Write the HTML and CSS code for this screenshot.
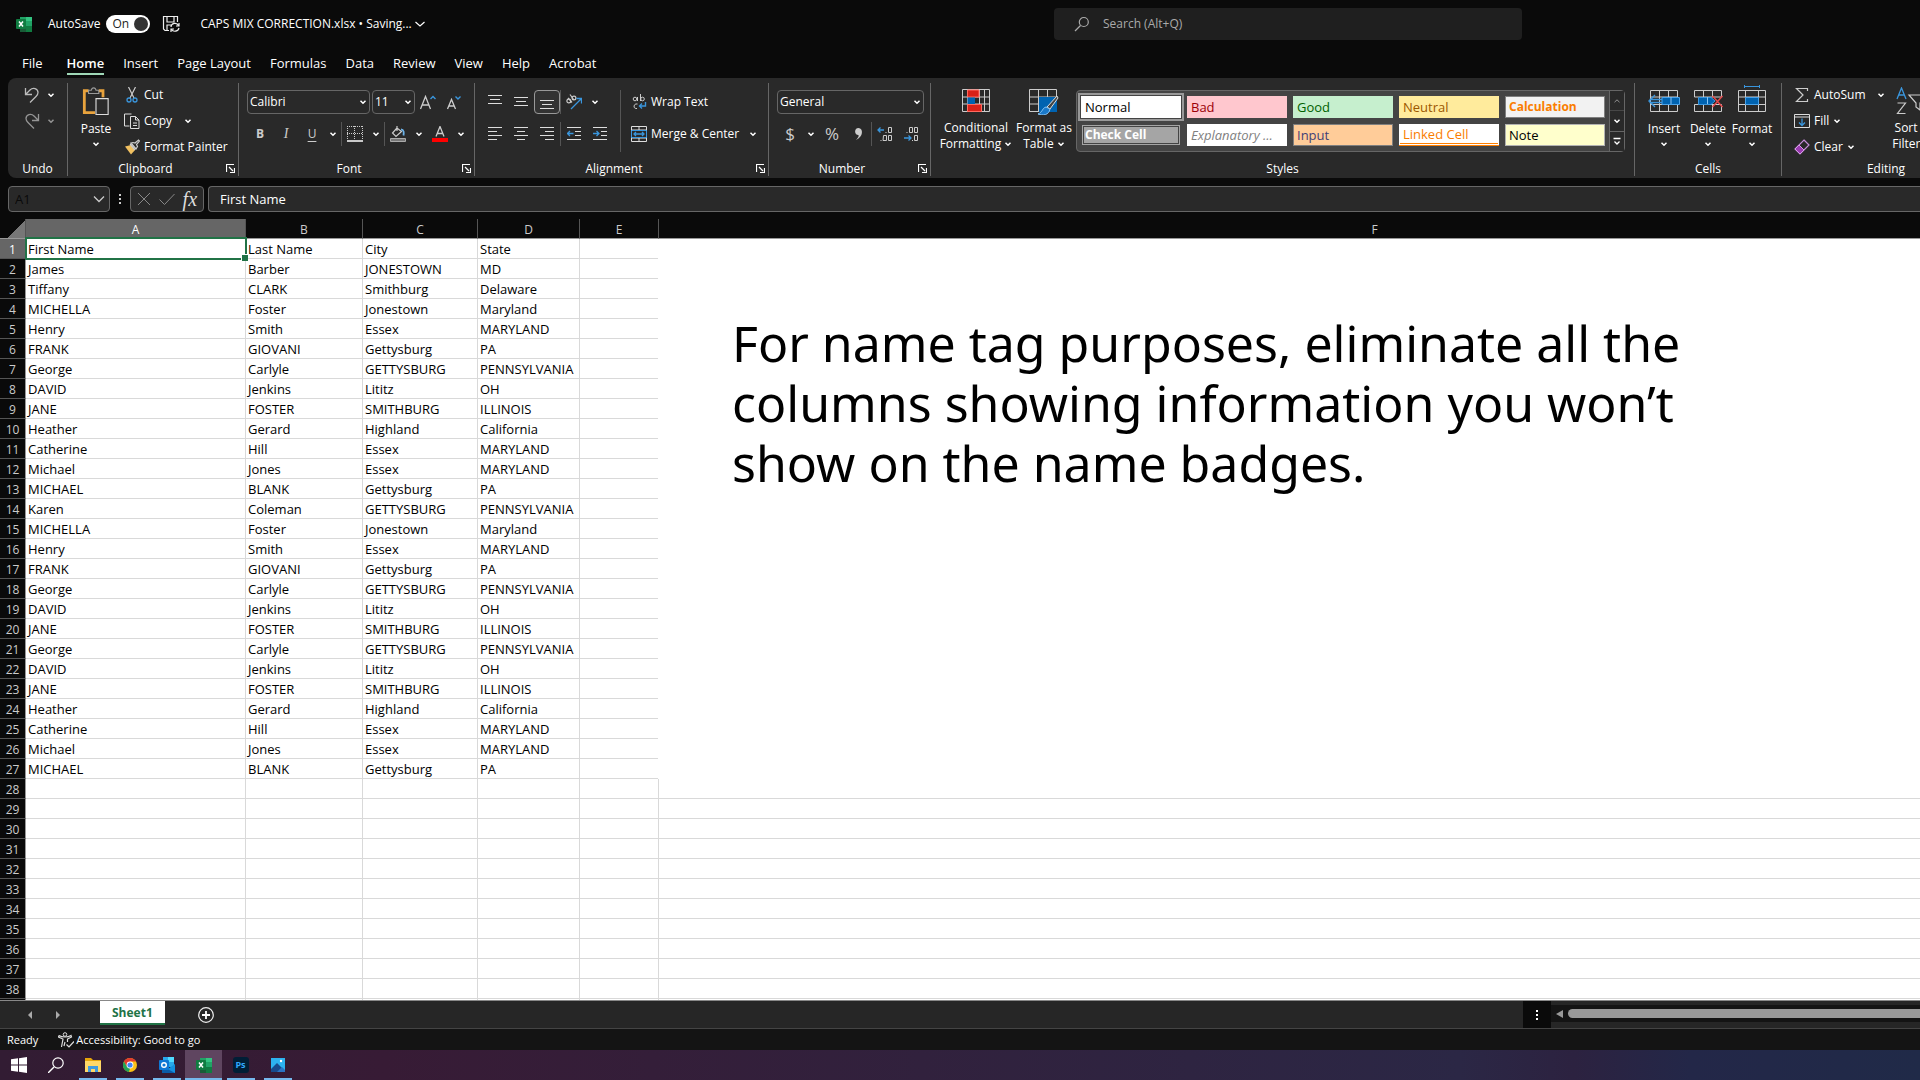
FILE: index.html
```html
<!DOCTYPE html>
<html lang="en">
<head>
    <meta charset="UTF-8">
    <meta name="viewport" content="width=device-width, initial-scale=1.0">
    <title>CAPS MIX CORRECTION.xlsx</title>
    <link rel="stylesheet" href="styles.css">
</head>
<body>
    <!-- shared icons -->
    <svg class="defs" aria-hidden="true">
        <symbol id="chev" viewBox="0 0 8 8"><path d="M1.5 2.8 4 5.2 6.500 2.800" fill="none" stroke="currentColor" stroke-width="1.500"/></symbol>
        <symbol id="launch" viewBox="0 0 9 9"><path d="M.5 8V.5H8M3 3l4 4M8.500 4v4.500H4" fill="none" stroke="currentColor" stroke-width="1.200"/></symbol>
        <symbol id="excel" viewBox="0 0 16 16">
            <path d="M4 1h6v7H4z" fill="#21a366"/><path d="M10 1h6v4h-6z" fill="#33c481"/><path d="M10 5h6v5h-6z" fill="#21a366"/>
            <path d="M4 8h6v8H4z" fill="#185c37"/><path d="M10 10h6v6h-6z" fill="#107c41"/>
            <rect y="3" width="10" height="10" rx="1" fill="#107c41"/><path d="m3 5.500 4 5m0-5-4 5" stroke="#fff" stroke-width="1.500"/>
        </symbol>
    </svg>

    <header class="titlebar">
        <svg class="i16"><use href="#excel"/></svg>
        <label class="autosave" for="autosave">AutoSave
            <span class="toggle">On <input type="checkbox" id="autosave" checked></span>
        </label>
        <button class="save" aria-label="Save"><svg class="i18" viewBox="0 0 18 18"><path d="M7 15.500H3L1.500 14V1.500h14V7M5 1.500V7h7V1.500M5 15.500V10h4" fill="none" stroke="#eee" stroke-width="1.200"/><path d="M9 12c0-4 6-5 7.500-1.500M17 8v3h-3M17 13c-1 4-6 4-7.500 1.500M9 17v-3h3" fill="none" stroke="#eee" stroke-width="1.200"/></svg></button>
        <button class="filename">CAPS MIX CORRECTION.xlsx • Saving... <svg class="i10" viewBox="0 0 10 10"><path d="m.5 3 4.500 4 4.500-4" fill="none" stroke="currentColor" stroke-width="1.200"/></svg></button>
        <label class="search">
            <svg class="i16" viewBox="0 0 16 16"><path d="M1 15l5.500-5.500" stroke="#aaa" stroke-width="1.200"/><circle cx="9.800" cy="6" r="4.500" fill="none" stroke="#aaa" stroke-width="1.200"/></svg>
            <input type="text" placeholder="Search (Alt+Q)" aria-label="Search">
        </label>
    </header>

    <nav class="tabs">
        <a href="#">File</a>
        <a href="#" class="active">Home</a>
        <a href="#">Insert</a>
        <a href="#">Page Layout</a>
        <a href="#">Formulas</a>
        <a href="#">Data</a>
        <a href="#">Review</a>
        <a href="#">View</a>
        <a href="#">Help</a>
        <a href="#">Acrobat</a>
    </nav>

    <div class="ribbon">
        <section class="group undo">
            <div class="stack">
                <button class="line"><svg class="i16" viewBox="0 0 16 16"><path d="M1.500 1v6.500H8M1.500 7.500 6 3c3-3 8-1.500 8 2.500 0 2-1 3-2 4L6 15.500" fill="none" stroke="#bbb" stroke-width="1.300"/></svg><svg class="i8"><use href="#chev"/></svg></button>
                <button class="line off"><svg class="i16" viewBox="0 0 16 16"><path d="M14.500 1v6.500H8M14.500 7.500 10 3C7 0 2 1.500 2 5.500c0 2 1 3 2 4l6 6" fill="none" stroke="#fff" stroke-width="1.300"/></svg><svg class="i8"><use href="#chev"/></svg></button>
            </div>
            <h2>Undo</h2>
        </section>

        <section class="group launch clipboard">
            <div class="body">
                <button class="big paste">
                    <svg class="i28" viewBox="0 0 28 30"><path d="M6 4H1.500v23.500H13M17 4h4.500v7" fill="none" stroke="#e8a33d" stroke-width="3"/><path d="M6 7V3.500h3C9.500 0 13.500 0 14 3.500h3V7z" fill="#2b2b2b" stroke="#999" stroke-width="1.200"/><path d="M14 12.500h13v17H14z" fill="#2b2b2b" stroke="#ddd" stroke-width="1.200"/></svg>
                    <span>Paste</span>
                    <svg class="i8"><use href="#chev"/></svg>
                </button>
                <div class="stack">
                    <button class="line"><svg class="i16" viewBox="0 0 16 16"><path d="m4.500 0 5.500 11M11.500 0 6 11" stroke="#ccc" stroke-width="1.200"/><circle cx="5" cy="13" r="2" fill="none" stroke="#3a96dd" stroke-width="1.300"/><circle cx="11" cy="13" r="2" fill="none" stroke="#3a96dd" stroke-width="1.300"/></svg>Cut</button>
                    <button class="line copy"><svg class="i16" viewBox="0 0 16 16"><path d="M5.500 13H.5V1h7M6.500 3.500h5l3.500 3.500v8.500H6.500zM11.500 3.500V7H15M9 10h4M9 12.500h4" fill="none" stroke="#ddd"/></svg>Copy <svg class="i8"><use href="#chev"/></svg></button>
                    <button class="line"><svg class="i16" viewBox="0 0 16 16"><path d="M1 7.500 7 6l4 5-4 4.500z" fill="#f0c060"/><path d="m6 5 5 6M7 4l5 6 1.500-2.500-1-2L15.500 2 14.500 1 11 4 9 3.500z" fill="none" stroke="#ccc" stroke-width="1.200"/></svg>Format Painter</button>
                </div>
            </div>
            <h2>Clipboard</h2>
            <button class="launcher" aria-label="Clipboard settings"><svg class="i9"><use href="#launch"/></svg></button>
        </section>

        <section class="group launch font">
            <div class="rows">
                <div class="row">
                    <span class="combo name"><select aria-label="Font"><option>Calibri</option></select><svg class="i8"><use href="#chev"/></svg></span>
                    <span class="combo size"><select aria-label="Font size"><option>11</option></select><svg class="i8"><use href="#chev"/></svg></span>
                    <button class="tool" aria-label="Increase font size"><svg class="i18" viewBox="0 0 18 18"><path d="M1.500 16 6.500 3.500 11.500 16M3 12h7" fill="none" stroke="#ccc" stroke-width="1.300"/><path d="m11.500 6 2.500-2.500L16.500 6" fill="none" stroke="#3a96dd" stroke-width="1.400"/></svg></button>
                    <button class="tool" aria-label="Decrease font size"><svg class="i18" viewBox="0 0 18 18"><path d="M2.500 16 6.500 6.500l4 9.500M4 13h5" fill="none" stroke="#ccc" stroke-width="1.300"/><path d="m10.500 3.500 2.500 2.500 2.500-2.500" fill="none" stroke="#3a96dd" stroke-width="1.400"/></svg></button>
                </div>
                <div class="row">
                    <button class="tool b">B</button>
                    <button class="tool i">I</button>
                    <button class="tool u">U</button>
                    <button class="drop" aria-label="Underline styles"><svg class="i8"><use href="#chev"/></svg></button>
                    <i class="bar"></i>
                    <button class="tool" aria-label="Borders"><svg class="i16" viewBox="0 0 16 16"><path d="M0 .5h16M0 7.500h16M.5 0v14M7.500 0v14M15.500 0v14" stroke="#ccc" stroke-dasharray="1 1"/><path d="M0 15h16" stroke="#fff" stroke-width="1.500"/></svg></button>
                    <button class="drop" aria-label="Border styles"><svg class="i8"><use href="#chev"/></svg></button>
                    <i class="bar"></i>
                    <button class="tool" aria-label="Fill color"><svg class="i16" viewBox="0 0 16 16"><path d="M7 0v5M7 2 2.500 7 6 10.500 11.500 5.500z" fill="none" stroke="#ccc" stroke-width="1.200"/><path d="M11 3.500c3 0 3 3 2.500 6" fill="none" stroke="#6cb2e8" stroke-width="1.800"/><path d="M.5 12.500h15v3H.5z" fill="#777" stroke="#aaa"/></svg></button>
                    <button class="drop" aria-label="Fill colors"><svg class="i8"><use href="#chev"/></svg></button>
                    <button class="tool" aria-label="Font color"><svg class="i16" viewBox="0 0 16 16"><path d="M4 10.500 8 .500l4 10M5.500 7.500h5" fill="none" stroke="#ccc" stroke-width="1.300"/><path d="M0 12h16v4H0z" fill="#f00"/></svg></button>
                    <button class="drop" aria-label="Font colors"><svg class="i8"><use href="#chev"/></svg></button>
                </div>
            </div>
            <h2>Font</h2>
            <button class="launcher" aria-label="Font settings"><svg class="i9"><use href="#launch"/></svg></button>
        </section>

        <section class="group launch alignment">
            <div class="body">
                <div class="rows">
                    <div class="row">
                        <button class="tool" aria-label="Top align"><svg class="i14" viewBox="0 0 14 14"><path d="M0 .5h14M2 4.500h10M0 8.500h14" stroke="#ddd"/></svg></button>
                        <button class="tool" aria-label="Middle align"><svg class="i14" viewBox="0 0 14 14"><path d="M0 2.500h14M2 6.500h10M0 10.500h14" stroke="#ddd"/></svg></button>
                        <button class="tool pressed" aria-label="Bottom align"><svg class="i14" viewBox="0 0 14 14"><path d="M0 5.500h14M2 9.500h10M0 13.500h14" stroke="#ddd"/></svg></button>
                        <i class="bar"></i>
                        <button class="tool" aria-label="Orientation"><svg class="i16" viewBox="0 0 16 16"><circle cx="2.800" cy="7" r="1.900" fill="none" stroke="#ccc" stroke-width="1.200"/><path d="M2 3.800 6 8.500" stroke="#ccc" stroke-width="1.200"/><circle cx="8" cy="4" r="1.900" fill="none" stroke="#ccc" stroke-width="1.200"/><path d="M4 .5 8 6" stroke="#ccc" stroke-width="1.200"/><path d="m5 15 10-10M10.500 4.500h5v5" fill="none" stroke="#3a96dd" stroke-width="1.300"/></svg></button>
                        <button class="drop" aria-label="Orientation options"><svg class="i8"><use href="#chev"/></svg></button>
                    </div>
                    <div class="row">
                        <button class="tool" aria-label="Align left"><svg class="i14" viewBox="0 0 14 14"><path d="M0 .5h14M0 4.500h9M0 8.500h14M0 12.500h9" stroke="#ddd"/></svg></button>
                        <button class="tool" aria-label="Center"><svg class="i14" viewBox="0 0 14 14"><path d="M0 .5h14M3 4.500h8M0 8.500h14M3 12.500h8" stroke="#ddd"/></svg></button>
                        <button class="tool" aria-label="Align right"><svg class="i14" viewBox="0 0 14 14"><path d="M0 .5h14M5 4.500h9M0 8.500h14M5 12.500h9" stroke="#ddd"/></svg></button>
                        <i class="bar"></i>
                        <button class="tool" aria-label="Decrease indent"><svg class="i14" viewBox="0 0 14 14"><path d="M0 .5h14M8 4.500h6M8 8.500h6M0 12.500h14" stroke="#ddd"/><path d="M6.500 6.500H.5M3 4 .5 6.500 3 9" fill="none" stroke="#3a96dd" stroke-width="1.300"/></svg></button>
                        <button class="tool" aria-label="Increase indent"><svg class="i14" viewBox="0 0 14 14"><path d="M0 .5h14M8 4.500h6M8 8.500h6M0 12.500h14" stroke="#ddd"/><path d="M0 6.500h6M3.500 4 6 6.500 3.500 9" fill="none" stroke="#3a96dd" stroke-width="1.300"/></svg></button>
                    </div>
                </div>
                <i class="bar tall"></i>
                <div class="rows wrap">
                    <button class="line"><svg class="i16" viewBox="0 0 16 16"><circle cx="4" cy="5" r="1.800" fill="none" stroke="#ccc"/><path d="M6.500 3v4M9.500 0v7M6.500 10c-4-1-5 5-.500 4.500" fill="none" stroke="#ccc"/><circle cx="11.500" cy="5" r="1.800" fill="none" stroke="#ccc"/><path d="M14.500 8v4H8.500M11 9.500 8.500 12l2.500 2.500" fill="none" stroke="#3a96dd" stroke-width="1.400"/></svg>Wrap Text</button>
                    <button class="line"><svg class="i16" viewBox="0 0 16 16"><path d="M.5.500h15v15H.5zM.5 4h15M.5 12h15M8 0v4M8 12v4" fill="none" stroke="#ddd"/><path d="M.5 4.500h15v7H.5z" fill="none" stroke="#3a96dd"/><path d="M3 8h10M5 6 3 8l2 2M11 6l2 2-2 2" fill="none" stroke="#3a96dd" stroke-width="1.300"/></svg>Merge &amp; Center <svg class="i8 far"><use href="#chev"/></svg></button>
                </div>
            </div>
            <h2>Alignment</h2>
            <button class="launcher" aria-label="Alignment settings"><svg class="i9"><use href="#launch"/></svg></button>
        </section>

        <section class="group launch number">
            <div class="rows">
                <div class="row"><span class="combo general"><select aria-label="Number format"><option>General</option></select><svg class="i8"><use href="#chev"/></svg></span></div>
                <div class="row">
                    <button class="tool sign">$</button>
                    <button class="drop" aria-label="Currencies"><svg class="i8"><use href="#chev"/></svg></button>
                    <button class="tool sign">%</button>
                    <button class="tool" aria-label="Comma style"><svg class="i14" viewBox="0 0 14 14"><path d="M7.500 1c5 0 5 9-2.500 12 2-2 3-3.500 2.500-5C3 8 3 1 7.500 1z" fill="#ccc"/></svg></button>
                    <i class="bar"></i>
                    <button class="tool dec" aria-label="Increase decimal"><svg class="i16" viewBox="0 0 16 16"><path d="M11.500 1.500h3v5h-3zM6.500 9.500h3v5H6zM11.500 9.500h3v5h-3zM8.500 6.500h1M3.500 14.500h1" fill="none" stroke="#ccc"/><path d="M7 4H1M3.500 1.500 1 4l2.500 2.500" fill="none" stroke="#3a96dd" stroke-width="1.300"/></svg></button>
                    <button class="tool dec" aria-label="Decrease decimal"><svg class="i16" viewBox="0 0 16 16"><path d="M6.500 1.500h3v5h-3zM11.500 1.500h3v5h-3zM11.500 9.500h3v5h-3zM3.500 6.500h1M9 14.500h1" fill="none" stroke="#ccc"/><path d="M1 12h7M5.500 9.500 8 12l-2.500 2.500" fill="none" stroke="#3a96dd" stroke-width="1.300"/></svg></button>
                </div>
            </div>
            <h2>Number</h2>
            <button class="launcher" aria-label="Number settings"><svg class="i9"><use href="#launch"/></svg></button>
        </section>

        <section class="group cellstyles">
            <div class="body">
                <button class="big cond">
                    <svg class="i28" viewBox="0 0 28 28"><path d="M.5 2.500h27v22H.5zM.5 10h27M.5 17h27M5.500 2v22M17.500 2v22M22.500 2v22" fill="none" stroke="#ccc"/><path d="M5.500 3H17v7H5.500zM5.500 17.500h14v7h-14z" fill="#d92118" stroke="#ff6a60"/><path d="M5.500 10.500H13V17H5.500z" fill="#0063b1"/></svg>
                    <span>Conditional<br>Formatting <svg class="i8"><use href="#chev"/></svg></span>
                </button>
                <button class="big astable">
                    <svg class="i30" viewBox="0 0 30 28"><path d="M.5 2.500h27v22H.5zM.5 10h27M.5 17h27M9.500 2v22M18.500 2v22" fill="none" stroke="#ccc"/><path d="M10 10h18v15H10z" fill="#0063b1"/><path d="m28 9-10 11 3 2 8-11z" fill="#444" stroke="#ddd"/><path d="M17 20c-4 1-3 5-8 7 5 2 11 1 12-5z" fill="#1a78c8" stroke="#8ac6f5"/></svg>
                    <span>Format as<br>Table <svg class="i8"><use href="#chev"/></svg></span>
                </button>
                <div class="gallery">
                    <div class="swatches">
                        <button class="sw normal">Normal</button>
                        <button class="sw bad">Bad</button>
                        <button class="sw good">Good</button>
                        <button class="sw neutral">Neutral</button>
                        <button class="sw calc">Calculation</button>
                        <button class="sw check">Check Cell</button>
                        <button class="sw expl">Explanatory ...</button>
                        <button class="sw inp">Input</button>
                        <button class="sw linked">Linked Cell</button>
                        <button class="sw note">Note</button>
                    </div>
                    <div class="scroll">
                        <button class="off" aria-label="Previous styles"><svg class="i8" viewBox="0 0 8 8"><path d="M1.500 5.200 4 2.800l2.500 2.400" fill="none" stroke="currentColor"/></svg></button>
                        <button aria-label="Next styles"><svg class="i8"><use href="#chev"/></svg></button>
                        <button aria-label="More styles"><svg class="i8" viewBox="0 0 8 8"><path d="M.5 1.500h7M1.500 4.500 4 7l2.500-2.500" fill="none" stroke="currentColor" stroke-width="1.300"/></svg></button>
                    </div>
                </div>
            </div>
            <h2>Styles</h2>
        </section>

        <section class="group cells">
            <div class="body">
                <button class="big">
                    <svg class="i32" viewBox="0 0 32 28"><path d="M2.500 5.500h27v21h-27zM2.500 12h27M2.500 19.500h27M11.500 5v21M20.500 5v21" fill="none" stroke="#ccc"/><path d="M14 12.500h17.500v7H14z" fill="#0063b1" stroke="#4aa3ea"/><path d="M23 12v7" stroke="#8ac6f5"/><path d="M14 14.500H1.500M14 17.500H1.500M7 10l-6 6 6 6" fill="none" stroke="#3a96dd" stroke-width="1.400"/></svg>
                    <span>Insert</span><svg class="i8"><use href="#chev"/></svg>
                </button>
                <button class="big">
                    <svg class="i32" viewBox="0 0 32 28"><path d="M2.500 12V5.500h27V12M2.500 19.500v7h27v-7M2.500 12h27M2.500 19.500h27M11.500 5v7M20.500 5v7M11.500 20v6M20.500 20v6" fill="none" stroke="#ccc"/><path d="M6.500 12.500H19l4 3.500-4 3.500H6.500z" fill="#0063b1" stroke="#3a96dd"/><path d="M15.500 12v7" stroke="#8ac6f5"/><path d="m20.500 11 10 11M30.500 11l-10 11" stroke="#e8484b" stroke-width="1.400"/></svg>
                    <span>Delete</span><svg class="i8"><use href="#chev"/></svg>
                </button>
                <button class="big">
                    <svg class="i32" viewBox="0 0 32 28"><path d="M2.500 5.500h27v21h-27zM2.500 12h27M2.500 19.500h27M9.500 5v21M22.500 5v21" fill="none" stroke="#ccc"/><path d="M9.500 12.500h13v7h-13z" fill="#0063b1" stroke="#4aa3ea"/><path d="M8.500 1.500h15M8.500 0v3M23.500 0v3" stroke="#3a96dd"/></svg>
                    <span>Format</span><svg class="i8"><use href="#chev"/></svg>
                </button>
            </div>
            <h2>Cells</h2>
        </section>

        <section class="group editing">
            <div class="body">
                <div class="stack">
                    <button class="line sum"><svg class="i16" viewBox="0 0 16 16"><path d="M13.500 4V1.500H2.500L9 8l-6.500 6.500h11V12" fill="none" stroke="#ccc" stroke-width="1.200"/></svg>AutoSum <svg class="i8"><use href="#chev"/></svg></button>
                    <button class="line"><svg class="i16" viewBox="0 0 16 16"><path d="M.5 1.500h15v13H.5zM.5 4h15" fill="none" stroke="#ddd"/><path d="M8 5.500v7M5 9.500l3 3 3-3" fill="none" stroke="#3a96dd" stroke-width="1.300"/></svg>Fill <svg class="i8"><use href="#chev"/></svg></button>
                    <button class="line"><svg class="i16" viewBox="0 0 16 16"><path d="m10 1 5 5-9 9-5-5z" fill="none" stroke="#c58bd8" stroke-width="1.200"/><path d="m5 6 5 5-4 4-5-5z" fill="#9a3bb0" stroke="#d79be8"/></svg>Clear <svg class="i8"><use href="#chev"/></svg></button>
                </div>
                <button class="big sort">
                    <svg class="i32" viewBox="0 0 32 28"><path d="M1 12 5.500 1 10 12M2.500 8h6" fill="none" stroke="#3a96dd" stroke-width="1.300"/><path d="M1.500 16h8L1.500 26.500h8M13 8h18l-7 8v7l-4-3v-4z" fill="none" stroke="#ccc" stroke-width="1.200"/></svg>
                    <span>Sort &amp;<br>Filter <svg class="i8"><use href="#chev"/></svg></span>
                </button>
            </div>
            <h2>Editing</h2>
        </section>
    </div>

    <div class="formulabar">
        <label class="namebox"><input type="text" value="A1" aria-label="Name box"><svg class="i12" viewBox="0 0 12 12"><path d="m1 3.500 5 5 5-5" fill="none" stroke="#ccc" stroke-width="1.300"/></svg></label>
        <span class="dots"><i></i><i></i><i></i></span>
        <div class="entry">
            <button aria-label="Cancel"><svg class="i14" viewBox="0 0 14 14"><path d="m1 1 12 12M13 1 1 13" stroke="#888"/></svg></button>
            <button aria-label="Enter"><svg class="i16" viewBox="0 0 16 16"><path d="m.5 8.500 5 5L15.500 3" fill="none" stroke="#888"/></svg></button>
            <button class="fx" aria-label="Insert function">fx</button>
        </div>
        <input class="formula" type="text" value="First Name" aria-label="Formula">
    </div>

    <main class="sheet">
        <table>
            <colgroup><col class="cn"><col class="ca"><col class="cb"><col class="cc"><col class="cd"><col class="ce"><col class="cf"></colgroup>
            <thead>
                <tr><th class="corner"></th><th class="sel">A</th><th>B</th><th>C</th><th>D</th><th>E</th><th>F</th></tr>
            </thead>
            <tbody id="rows"></tbody>
        </table>
        <div class="textbox">For name tag purposes, eliminate all the<br>columns showing information you won’t<br>show on the name badges.</div>
    </main>

    <div class="sheetbar">
        <button class="arrow" aria-label="Previous sheet"><svg class="i8" viewBox="0 0 8 8"><path d="M6 0v8L2 4z" fill="#aaa"/></svg></button>
        <button class="arrow" aria-label="Next sheet"><svg class="i8" viewBox="0 0 8 8"><path d="M2 0v8l4-4z" fill="#aaa"/></svg></button>
        <button class="sheettab">Sheet1</button>
        <button class="add" aria-label="New sheet"><svg class="i16" viewBox="0 0 16 16"><circle cx="8" cy="8" r="7.300" fill="none" stroke="#eee" stroke-width="1.200"/><path d="M8 4v8M4 8h8" stroke="#fff" stroke-width="1.800"/></svg></button>
        <span class="dots grip"><i></i><i></i><i></i></span>
        <div class="hscroll"><svg class="i8" viewBox="0 0 8 8"><path d="M8 0v8L1 4z" fill="#999"/></svg><span class="thumb"></span></div>
    </div>

    <footer class="status">
        <span>Ready</span>
        <svg class="i16" viewBox="0 0 16 16"><circle cx="7" cy="2.500" r="1.800" fill="none" stroke="#ddd"/><path d="M1 3.500c3 2 9 2 12 0l.5 1.500-4 2v3M1 3.500.500 5 5 7l-1.500 8M7 10l-1 4M8.500 12.500l2.500 2.500 5-5.500" fill="none" stroke="#ddd" stroke-width="1.200"/></svg>
        <span>Accessibility: Good to go</span>
    </footer>

    <nav class="taskbar">
        <button aria-label="Start"><svg class="i16" viewBox="0 0 16 16"><path d="M0 2.300 7 1.300v6.200H0zM8 1.200 16 0v7.500H8zM0 8.500h7v6.200l-7-1zM8 8.500h8V16l-8-1.200z" fill="#fff"/></svg></button>
        <button aria-label="Search"><svg class="i16" viewBox="0 0 16 16"><path d="M0 16l6-6" stroke="#fff" stroke-width="1.400"/><circle cx="10" cy="6" r="5.200" fill="none" stroke="#fff" stroke-width="1.200"/></svg></button>
        <button class="open" aria-label="File Explorer"><svg class="i16" viewBox="0 0 16 16"><path d="M0 1h6l2 2h8v5H0z" fill="#e5a50a"/><path d="M0 4h16v11H0z" fill="#ffd868"/><path d="M3 15V9h10v6h-3v-3H6v3z" fill="#3f9be0"/></svg></button>
        <button class="open" aria-label="Chrome"><svg class="i16" viewBox="0 0 16 16"><circle cx="8" cy="8" r="7" fill="#fbc116"/><path d="M1.900 4.500a7 7 0 0 1 12.200 0H8L5 9.800z" fill="#e33b2e"/><path d="M1.900 4.500 5 9.700l3 1.800L6.900 15A7 7 0 0 1 1.900 4.500z" fill="#23a455"/><circle cx="8" cy="8" r="3.400" fill="#fff"/><circle cx="8" cy="8" r="2.600" fill="#4285f4"/></svg></button>
        <button class="open" aria-label="Outlook"><svg class="i16" viewBox="0 0 16 16"><path d="M4 0h11v10H4z" fill="#28a8ea"/><path d="M9 0h6v5H9z" fill="#50d9ff"/><path d="M4 5h5v5H4z" fill="#0078d4"/><path d="M3 16 16 7v9z" fill="#1490df"/><path d="M3 9l13 7H3z" fill="#0a5ba8"/><rect y="3" width="10" height="10" rx="1" fill="#0f78d4"/><circle cx="5" cy="8" r="2.300" fill="none" stroke="#fff" stroke-width="1.400"/></svg></button>
        <button class="open current" aria-label="Excel"><svg class="i16"><use href="#excel"/></svg></button>
        <button class="open" aria-label="Photoshop"><span class="ps">Ps</span></button>
        <button class="open" aria-label="Photos"><svg class="i16" viewBox="0 0 16 16"><path d="M1 1h14v14H1z" fill="#2db2f0"/><path d="m1 12 6-6 8 8v1H1z" fill="#174a8c"/><path d="m7 15 5-5 3 3v2z" fill="#2a74c4"/><circle cx="11" cy="4" r="1.200" fill="#fff"/></svg></button>
    </nav>

    <script src="script.js"></script>
</body>
</html>
```
FILE: styles.css
```css
* {
    box-sizing: border-box;
}
body {
    margin: 0;
    height: 100vh;
    display: flex;
    flex-direction: column;
    overflow: hidden;
    background: #0a0a0a;
    color: #fff;
    font-family: "Open Sans", "Noto Sans", sans-serif;
    font-size: 12px;
    line-height: 16px;
}
button, input, select {
    margin: 0;
    padding: 0;
    border: 0;
    background: none;
    color: inherit;
    font: inherit;
    outline: none;
}
button {
    white-space: nowrap;
}
a {
    color: inherit;
    text-decoration: none;
}
svg {
    flex: none;
}
.defs {
    display: none;
}
.i8 { width: 8px; height: 8px; }
.i9 { width: 9px; height: 9px; }
.i10 { width: 10px; height: 10px; }
.i12 { width: 12px; height: 12px; }
.i14 { width: 14px; height: 14px; }
.i16 { width: 16px; height: 16px; }
.i18 { width: 18px; height: 18px; }
.i28 { width: 28px; height: 28px; }
.i30 { width: 30px; height: 28px; }
.i32 { width: 32px; height: 28px; }

/* title bar */
.titlebar {
    display: flex;
    align-items: center;
    height: 48px;
    flex: none;
    padding-left: 16px;
}
.autosave {
    display: flex;
    align-items: center;
    gap: 6px;
    margin-left: 16px;
}
.toggle {
    display: flex;
    align-items: center;
    justify-content: space-between;
    width: 44px;
    height: 18px;
    padding: 0 2px 0 6px;
    border-radius: 9px;
    background: #fff;
    color: #222;
}
.toggle input {
    appearance: none;
    width: 14px;
    height: 14px;
    border-radius: 50%;
    background: #333;
}
.save {
    display: flex;
    margin-left: 12px;
}
.filename {
    margin-left: 20px;
}
.filename svg {
    vertical-align: -1px;
}
.search {
    position: absolute;
    left: 1054px;
    top: 8px;
    display: flex;
    align-items: center;
    gap: 13px;
    width: 468px;
    height: 32px;
    padding-left: 20px;
    border-radius: 4px;
    background: #1f1f1f;
}
.search input {
    flex: 1;
}
.search input::placeholder {
    color: #aaa;
    opacity: 1;
}

/* ribbon tabs */
.tabs {
    display: flex;
    gap: 19px;
    flex: none;
    height: 30px;
    padding: 7px 0 0 22px;
    font-size: 13px;
}
.tabs a {
    height: 20px;
}
.tabs .active {
    margin-left: 5px;
    font-weight: 600;
    border-bottom: 2px solid #9fd8b7;
}

/* ribbon */
.ribbon {
    display: flex;
    flex: none;
    height: 100px;
    margin-left: 8px;
    padding: 5px 0 2px;
    overflow: hidden;
    border-radius: 8px 0 0 8px;
    background: #292929;
}
.group {
    position: relative;
    display: flex;
    flex-direction: column;
    flex: none;
    border-right: 1px solid #666;
}
.group h2 {
    margin: auto 0 0;
    font-size: 12px;
    font-weight: 400;
    line-height: 14px;
    text-align: center;
}
.launch h2 {
    padding-right: 15px;
}
.launcher {
    position: absolute;
    right: 3px;
    bottom: 3px;
    display: flex;
}
.undo { width: 60px; }
.clipboard { width: 171px; }
.font { width: 236px; }
.alignment { width: 294px; }
.number { width: 162px; }
.cellstyles { width: 704px; }
.cells { width: 147px; }
.editing { width: 208px; border-right: 0; }
.body {
    display: flex;
}
.stack {
    display: flex;
    flex-direction: column;
    margin-top: -1px;
}
.stack .line {
    height: 26px;
}
.line {
    display: flex;
    align-items: center;
    gap: 4px;
}
.off {
    opacity: 0.5;
}
.undo .stack {
    padding-left: 16px;
}
.undo .line {
    gap: 7px;
}
.big {
    display: flex;
    flex-direction: column;
    align-items: center;
    line-height: 16px;
}
.paste {
    width: 56px;
    padding-top: 4px;
}
.paste span, .cells .big span {
    padding: 6px 0 3px;
}
.copy .i8 {
    margin-left: 8px;
}
.rows {
    display: flex;
    flex-direction: column;
    gap: 8px;
    padding-top: 7px;
}
.row {
    display: flex;
    align-items: center;
    height: 24px;
}
.font .rows {
    padding-left: 8px;
}
.combo {
    display: flex;
    align-items: center;
    height: 24px;
    padding: 0 2px;
    border: 1px solid #666;
    border-radius: 4px;
}
.combo select {
    flex: 1;
    min-width: 0;
    appearance: none;
}
.name {
    width: 123px;
    margin-right: 2px;
}
.size {
    width: 43px;
}
.general {
    width: 147px;
}
.tool {
    display: flex;
    align-items: center;
    justify-content: center;
    width: 26px;
    height: 24px;
    color: #ccc;
}
.drop {
    display: flex;
    justify-content: center;
    width: 16px;
    color: #fff;
}
.bar {
    width: 1px;
    height: 24px;
    background: #555;
}
.tall {
    height: 62px;
    margin: 7px 10px 0 0;
}
.b { font-weight: 700; }
.i { font-family: "Liberation Serif", serif; font-size: 14px; font-style: italic; }
.u { text-decoration: underline; text-underline-offset: 3px; }
.pressed {
    border: 1px solid #999;
    border-radius: 4px;
    background: #333;
}
.alignment .body > .rows:first-child {
    width: 145px;
    padding-left: 7px;
}
.alignment .far {
    margin-left: 6px;
}
.wrap .line {
    height: 24px;
}
.number .rows {
    padding-left: 8px;
}
.sign {
    font-size: 17px;
}

/* styles gallery */
.cond {
    width: 72px;
    margin-left: 9px;
    padding-top: 4px;
}
.astable {
    width: 64px;
    padding-top: 4px;
}
.cond span, .astable span, .sort span {
    padding-top: 5px;
}
.gallery {
    display: flex;
    height: 62px;
    margin-top: 7px;
    border: 1px solid #666;
    border-radius: 4px;
    background: #444;
    font-size: 13px;
}
.swatches {
    display: grid;
    grid-template-columns: repeat(5, 100px);
    gap: 6px;
    padding: 5px 4px;
}
.sw {
    height: 22px;
    padding: 0 3px;
    border: 1px solid transparent;
    text-align: left;
    line-height: 20px;
}
.normal { background: #fff; color: #000; outline: 2px solid #999; outline-offset: 1px; }
.bad { background: #ffc7ce; color: #9c0006; }
.good { background: #c6efce; color: #006100; }
.neutral { background: #ffeb9c; color: #9c5700; }
.calc { background: #f2f2f2; color: #fa7d00; border-color: #7f7f7f; font-size: 12px; font-weight: 700; }
.check { background: #a5a5a5; color: #fff; border: 3px double #444; padding: 0 1px; line-height: 16px; font-size: 12px; font-weight: 700; }
.expl { background: #fff; color: #7f7f7f; font-style: italic; }
.inp { background: #ffcc99; color: #3f3f76; border-color: #7f7f7f; }
.linked { background: #fff; color: #fa7d00; border-bottom: 3px double #ff8001; line-height: 18px; }
.note { background: #ffffcc; color: #000; border-color: #b2b2b2; }
.scroll {
    display: flex;
    flex-direction: column;
    width: 15px;
    background: #292929;
    border-left: 1px solid #666;
}
.scroll button {
    display: flex;
    flex: 1;
    align-items: center;
    justify-content: center;
    border-bottom: 1px solid #666;
}
.scroll button:last-child {
    border-bottom: 0;
}
.cells .body {
    padding: 2px 0 0 7px;
}
.cells .big {
    width: 44px;
}
.cells .big span {
    padding-top: 8px;
}
.editing .stack {
    width: 94px;
    padding-left: 12px;
}
.sum .i8 {
    margin-left: 7px;
}
.sort {
    width: 60px;
    margin-left: 6px;
    padding-top: 4px;
}

/* formula bar */
.formulabar {
    display: flex;
    align-items: center;
    flex: none;
    height: 41px;
    padding-left: 8px;
}
.formulabar > label, .entry, .formula {
    display: flex;
    align-items: center;
    height: 26px;
    border: 1px solid #666;
    border-radius: 4px;
    background: #292929;
}
.namebox {
    width: 102px;
    padding: 0 4px 0 6px;
}
.namebox input {
    flex: 1;
    min-width: 0;
    color: #0a0a0a;
    font-size: 13px;
}
.dots {
    display: flex;
    flex-direction: column;
    align-items: center;
    gap: 2px;
    width: 20px;
}
.dots i {
    width: 2px;
    height: 2px;
    background: #ccc;
}
.entry {
    width: 74px;
    justify-content: space-around;
    padding: 0 2px;
}
.entry button {
    display: flex;
}
.fx {
    color: #ddd;
    font-family: "Liberation Serif", serif;
    font-size: 20px;
    font-style: italic;
}
.formula {
    flex: 1;
    margin-left: 4px;
    padding-left: 11px;
    border-right: 0;
    border-radius: 4px 0 0 4px;
    font-size: 13px;
}

/* sheet */
.sheet {
    position: relative;
    flex: 1;
    min-height: 0;
    overflow: hidden;
    background: #fff;
    color: #000;
    font-size: 13px;
}
table {
    width: 2091px;
    table-layout: fixed;
    border-collapse: separate;
    border-spacing: 0;
}
.cn { width: 26px; }
.ca { width: 220px; }
.cb { width: 117px; }
.cc { width: 115px; }
.cd { width: 102px; }
.ce { width: 79px; }
th, td {
    height: 20px;
    padding: 2px 2px 0;
    border-right: 1px solid #d9d9d9;
    border-bottom: 1px solid #d9d9d9;
    text-align: left;
    line-height: 17px;
    white-space: nowrap;
}
th {
    padding: 1px 0 0;
    background: #0a0a0a;
    color: #ccc;
    border-color: #555;
    font-size: 12px;
    font-weight: 400;
    text-align: center;
}
thead th {
    border-bottom-color: #999;
}
th.sel {
    background: #666;
    color: #fff;
}
tbody th {
    border-right-color: #999;
}
.corner {
    background: linear-gradient(135deg, #0a0a0a 60%, #777 60%);
}
.active-cell {
    position: relative;
}
.active-cell::before {
    content: "";
    position: absolute;
    inset: -2px -2px -2px -1px;
    border: 2px solid #217346;
}
.active-cell::after {
    content: "";
    position: absolute;
    right: -3px;
    bottom: -3px;
    width: 6px;
    height: 6px;
    border: solid #fff;
    border-width: 1px 0 0 1px;
    background: #217346;
}
.textbox {
    position: absolute;
    left: 658px;
    top: 20px;
    right: 0;
    height: 540px;
    padding: 74px 0 0 74px;
    background: #fff;
    font-family: "Noto Sans", sans-serif;
    font-size: 50px;
    line-height: 60px;
    white-space: nowrap;
}

/* sheet tabs and scroll bar */
.sheetbar {
    display: flex;
    flex: none;
    height: 29px;
    border-top: 1px solid #888;
    border-bottom: 1px solid #444;
    background: #262626;
}
.arrow {
    width: 28px;
}
.arrow:first-child {
    margin-left: 16px;
}
.sheettab {
    height: 24px;
    margin-left: 28px;
    padding: 2px 12px 0;
    border-bottom: 2px solid #217346;
    background: #fff;
    color: #217346;
    font-weight: 700;
}
.add {
    display: flex;
    align-items: center;
    margin-left: 33px;
}
.grip {
    justify-content: center;
    width: 28px;
    margin-left: auto;
    background: #0a0a0a;
}
.grip i {
    background: #fff;
}
.hscroll {
    display: flex;
    align-items: center;
    gap: 5px;
    width: 369px;
    height: 17px;
    margin-top: 4px;
    padding-left: 4px;
    background: #141414;
}
.thumb {
    flex: 1;
    height: 9px;
    border-radius: 5px 0 0 5px;
    background: #999;
}

/* status bar */
.status {
    display: flex;
    align-items: center;
    flex: none;
    height: 21px;
    padding-left: 7px;
    background: #141414;
    font-size: 11px;
}
.status svg {
    margin: 0 2px 0 20px;
}

/* taskbar */
.taskbar {
    display: flex;
    flex: none;
    height: 30px;
    background: linear-gradient(90deg, #321c33, #371b35 20%, #2b2745 76%, #2c2240 82%, #232748 88%, #202a48);
}
.taskbar button {
    display: flex;
    align-items: center;
    justify-content: center;
    width: 37px;
}
.taskbar .open::after {
    content: "";
    position: absolute;
    bottom: 0;
    width: 28px;
    height: 2px;
    background: #76b9ed;
}
.taskbar .current {
    background: #5f4560;
}
.taskbar .current::after {
    width: 37px;
}
.ps {
    width: 16px;
    height: 16px;
    border-radius: 3px;
    background: #001e36;
    color: #31a8ff;
    font-size: 9px;
    font-weight: 700;
}
```
FILE: script.js
```js
const people = [
    ['First Name', 'Last Name', 'City', 'State'],
    ['James', 'Barber', 'JONESTOWN', 'MD'],
    ['Tiffany', 'CLARK', 'Smithburg', 'Delaware'],
    ['MICHELLA', 'Foster', 'Jonestown', 'Maryland'],
    ['Henry', 'Smith', 'Essex', 'MARYLAND'],
    ['FRANK', 'GIOVANI', 'Gettysburg', 'PA'],
    ['George', 'Carlyle', 'GETTYSBURG', 'PENNSYLVANIA'],
    ['DAVID', 'Jenkins', 'Lititz', 'OH'],
    ['JANE', 'FOSTER', 'SMITHBURG', 'ILLINOIS'],
    ['Heather', 'Gerard', 'Highland', 'California'],
    ['Catherine', 'Hill', 'Essex', 'MARYLAND'],
    ['Michael', 'Jones', 'Essex', 'MARYLAND'],
    ['MICHAEL', 'BLANK', 'Gettysburg', 'PA'],
    ['Karen', 'Coleman', 'GETTYSBURG', 'PENNSYLVANIA'],
    ['MICHELLA', 'Foster', 'Jonestown', 'Maryland'],
    ['Henry', 'Smith', 'Essex', 'MARYLAND'],
    ['FRANK', 'GIOVANI', 'Gettysburg', 'PA'],
    ['George', 'Carlyle', 'GETTYSBURG', 'PENNSYLVANIA'],
    ['DAVID', 'Jenkins', 'Lititz', 'OH'],
    ['JANE', 'FOSTER', 'SMITHBURG', 'ILLINOIS'],
    ['George', 'Carlyle', 'GETTYSBURG', 'PENNSYLVANIA'],
    ['DAVID', 'Jenkins', 'Lititz', 'OH'],
    ['JANE', 'FOSTER', 'SMITHBURG', 'ILLINOIS'],
    ['Heather', 'Gerard', 'Highland', 'California'],
    ['Catherine', 'Hill', 'Essex', 'MARYLAND'],
    ['Michael', 'Jones', 'Essex', 'MARYLAND'],
    ['MICHAEL', 'BLANK', 'Gettysburg', 'PA']
];

const tbody = document.getElementById('rows');
for (let i = 0; i < 39; i++) {
    const row = tbody.insertRow();
    const head = document.createElement('th');
    head.textContent = i < 38 ? i + 1 : '';
    row.appendChild(head);
    for (let c = 0; c < 6; c++) {
        row.insertCell().textContent = (people[i] || [])[c] || '';
    }
}
tbody.rows[0].cells[0].className = 'sel';
tbody.rows[0].cells[1].className = 'active-cell';
```
